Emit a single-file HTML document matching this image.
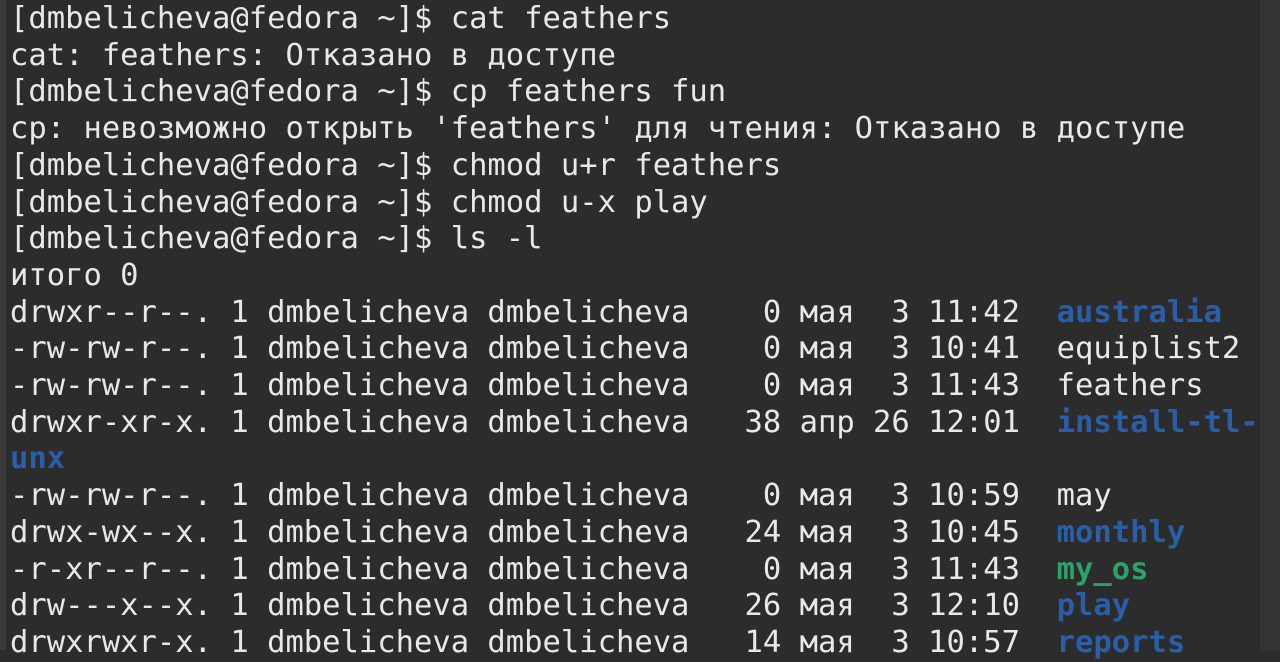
<!DOCTYPE html>
<html><head><meta charset="utf-8"><style>
html,body{margin:0;padding:0;width:1280px;height:650px;overflow:hidden;background:#2c2c2c;}
.l{position:absolute;left:0;top:0;width:6px;height:650px;background:#3a3a3a;}
.r{position:absolute;left:1260px;top:0;width:20px;height:650px;background:#343434;}
pre{position:absolute;left:10px;top:1px;margin:0;font-family:"DejaVu Sans Mono","Liberation Mono",monospace;font-size:30.5px;line-height:36.7px;color:#e8e8e8;}
.b{color:#2a5fa8;font-weight:bold;}
.g{color:#2aa36a;font-weight:bold;}
</style></head><body><div class="l"></div><div class="r"></div>
<pre>[dmbelicheva@fedora ~]$ cat feathers
cat: feathers: Отказано в доступе
[dmbelicheva@fedora ~]$ cp feathers fun
cp: невозможно открыть 'feathers' для чтения: Отказано в доступе
[dmbelicheva@fedora ~]$ chmod u+r feathers
[dmbelicheva@fedora ~]$ chmod u-x play
[dmbelicheva@fedora ~]$ ls -l
итого 0
drwxr--r--. 1 dmbelicheva dmbelicheva    0 мая  3 11:42  <span class="b">australia</span>
-rw-rw-r--. 1 dmbelicheva dmbelicheva    0 мая  3 10:41  equiplist2
-rw-rw-r--. 1 dmbelicheva dmbelicheva    0 мая  3 11:43  feathers
drwxr-xr-x. 1 dmbelicheva dmbelicheva   38 апр 26 12:01  <span class="b">install-tl-</span>
<span class="b">unx</span>
-rw-rw-r--. 1 dmbelicheva dmbelicheva    0 мая  3 10:59  may
drwx-wx--x. 1 dmbelicheva dmbelicheva   24 мая  3 10:45  <span class="b">monthly</span>
-r-xr--r--. 1 dmbelicheva dmbelicheva    0 мая  3 11:43  <span class="g">my_os</span>
drw---x--x. 1 dmbelicheva dmbelicheva   26 мая  3 12:10  <span class="b">play</span>
drwxrwxr-x. 1 dmbelicheva dmbelicheva   14 мая  3 10:57  <span class="b">reports</span></pre>
</body></html>
